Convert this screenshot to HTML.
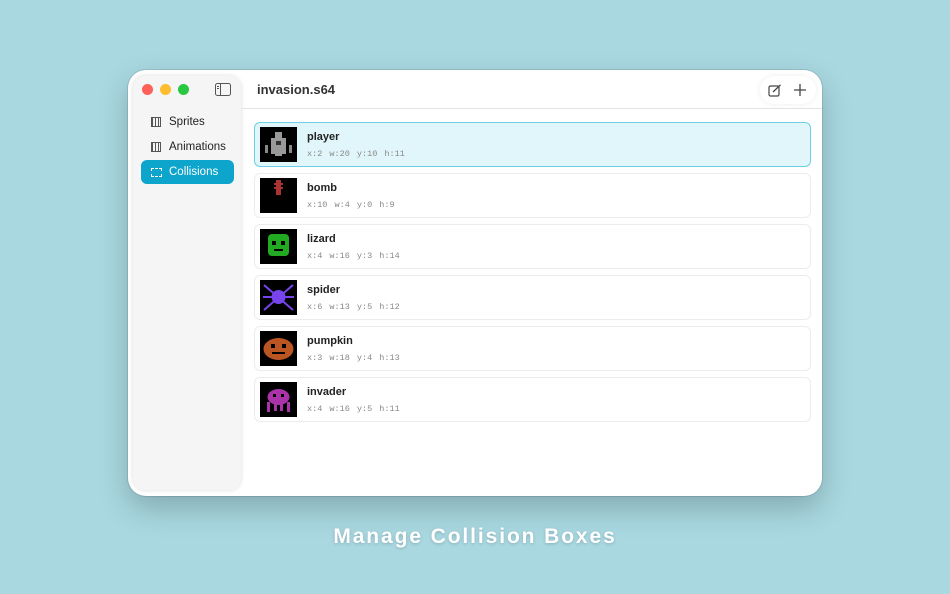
<!DOCTYPE html>
<html><head><meta charset="utf-8"><style>
*{box-sizing:border-box;margin:0;padding:0}
body{width:950px;height:594px;background:#a9d8e1;font-family:"Liberation Sans",sans-serif;position:relative;overflow:hidden}
.win{position:absolute;left:128px;top:70px;width:694px;height:426px;background:#fff;border-radius:18px;box-shadow:0 12px 30px rgba(0,0,0,.22),0 0 0 1px rgba(0,0,0,.1);overflow:hidden}
.side{position:absolute;left:5px;top:6px;width:108px;height:414px;background:#f5f5f5;border-radius:12px;box-shadow:0 0 5px rgba(0,0,0,.15)}
.dot{position:absolute;top:8px;width:11px;height:11px;border-radius:50%}
.nav{position:absolute;left:8px;width:93px;height:24px;border-radius:6px;font-size:11.5px;color:#222;line-height:24px;padding-left:28px}
.nav.sel{background:#0ea5cc;color:#fff}
.ic{position:absolute;left:10px;top:7px;width:10px;height:10px;border:1px solid #555;background:repeating-linear-gradient(90deg,#555 0 1px,transparent 1px 3px)}
.title{position:absolute;left:129px;top:12px;font-size:13px;font-weight:bold;color:#333}
.hline{position:absolute;left:113px;right:0;top:38px;height:1px;background:#e3e3e3}
.tools{position:absolute;right:6px;top:6px;width:56px;height:28px;border-radius:14px;background:#fff;box-shadow:0 0 6px rgba(0,0,0,.08)}
.row{position:absolute;left:126px;width:557px;height:45px;border:1px solid #ececec;border-radius:6px;background:#fff}
.row.sel{background:#e0f6fa;border-color:#6ccfe3}
.th{position:absolute;left:5px;top:4px;width:37px;height:35px;background:#000}
.nm{position:absolute;left:52px;top:8px;font-size:11px;font-weight:bold;color:#222}
.dt{position:absolute;left:52px;top:26px;font-family:"Liberation Mono",monospace;font-size:8.5px;color:#888;word-spacing:2px}
.cap{position:absolute;top:525px;left:0;width:950px;text-align:center;color:#fff;font-weight:bold;font-size:21px;letter-spacing:1.9px;text-shadow:0 1px 3px rgba(0,0,0,.2)}
</style></head><body>
<div class="win">
 <div class="side">
  <div class="dot" style="left:9px;background:#fe5f57"></div>
  <div class="dot" style="left:27px;background:#febc2e"></div>
  <div class="dot" style="left:45px;background:#28c840"></div>
  <svg style="position:absolute;left:82px;top:7px" width="16" height="13"><rect x="0.5" y="0.5" width="15" height="12" rx="2" fill="none" stroke="#555"/><line x1="5.5" y1="1" x2="5.5" y2="12" stroke="#555"/><line x1="2" y1="3.5" x2="4" y2="3.5" stroke="#555"/><line x1="2" y1="5.5" x2="4" y2="5.5" stroke="#555"/></svg>
  <div class="nav" style="top:34px"><span class="ic"></span>Sprites</div>
  <div class="nav" style="top:59px"><span class="ic"></span>Animations</div>
  <div class="nav sel" style="top:84px"><span class="ic" style="border:1px dashed #fff;background:none;width:11px;height:9px;top:8px"></span>Collisions</div>
 </div>
 <div class="title">invasion.s64</div>
 <div class="hline"></div>
 <div class="tools">
  <svg style="position:absolute;left:8px;top:8px" width="14" height="13"><rect x="1" y="2" width="10" height="10" rx="1.5" fill="none" stroke="#444" stroke-width="1.2"/><line x1="5" y1="8" x2="12.5" y2="0.8" stroke="#444" stroke-width="1.3"/></svg>
  <svg style="position:absolute;left:34px;top:8px" width="12" height="12"><line x1="6" y1="0" x2="6" y2="12" stroke="#444" stroke-width="1.3"/><line x1="0" y1="6" x2="12" y2="6" stroke="#444" stroke-width="1.3"/></svg>
 </div>
 <div class="row sel" style="top:52px"><div class="th"><svg width="37" height="35"><rect x="15" y="5" width="7" height="24" fill="#999"/><rect x="11" y="11" width="15" height="16" fill="#999"/><rect x="5" y="18" width="3" height="8" fill="#888"/><rect x="29" y="18" width="3" height="8" fill="#888"/><rect x="16" y="14" width="5" height="4" fill="#333"/></svg></div><div class="nm">player</div><div class="dt">x:2 w:20 y:10 h:11</div></div>
 <div class="row" style="top:103px"><div class="th"><svg width="37" height="35"><rect x="16" y="2" width="5" height="15" fill="#a33"/><rect x="14" y="5" width="9" height="2" fill="#a33"/><rect x="14" y="9" width="9" height="2" fill="#a33"/></svg></div><div class="nm">bomb</div><div class="dt">x:10 w:4 y:0 h:9</div></div>
 <div class="row" style="top:154px"><div class="th"><svg width="37" height="35"><rect x="8" y="5" width="21" height="22" rx="4" fill="#2a2"/><rect x="12" y="12" width="4" height="4" fill="#000"/><rect x="21" y="12" width="4" height="4" fill="#000"/><rect x="14" y="20" width="9" height="2" fill="#000"/></svg></div><div class="nm">lizard</div><div class="dt">x:4 w:16 y:3 h:14</div></div>
 <div class="row" style="top:205px"><div class="th"><svg width="37" height="35" stroke="#74e" stroke-width="2"><line x1="4" y1="5" x2="33" y2="30"/><line x1="33" y1="5" x2="4" y2="30"/><line x1="3" y1="17" x2="34" y2="17"/><circle cx="18.5" cy="17" r="6" fill="#74e"/></svg></div><div class="nm">spider</div><div class="dt">x:6 w:13 y:5 h:12</div></div>
 <div class="row" style="top:256px"><div class="th"><svg width="37" height="35"><ellipse cx="18.5" cy="18" rx="15" ry="11" fill="#b52"/><rect x="11" y="13" width="4" height="4" fill="#000"/><rect x="22" y="13" width="4" height="4" fill="#000"/><rect x="12" y="21" width="13" height="2" fill="#000"/></svg></div><div class="nm">pumpkin</div><div class="dt">x:3 w:18 y:4 h:13</div></div>
 <div class="row" style="top:307px"><div class="th"><svg width="37" height="35"><ellipse cx="18.5" cy="15" rx="11" ry="8" fill="#a3a"/><rect x="7" y="20" width="3" height="10" fill="#a3a"/><rect x="27" y="20" width="3" height="10" fill="#a3a"/><rect x="14" y="20" width="3" height="9" fill="#a3a"/><rect x="20" y="20" width="3" height="9" fill="#a3a"/><rect x="13" y="12" width="3" height="3" fill="#000"/><rect x="21" y="12" width="3" height="3" fill="#000"/></svg></div><div class="nm">invader</div><div class="dt">x:4 w:16 y:5 h:11</div></div>
</div>
<div class="cap">Manage Collision Boxes</div>
</body></html>
